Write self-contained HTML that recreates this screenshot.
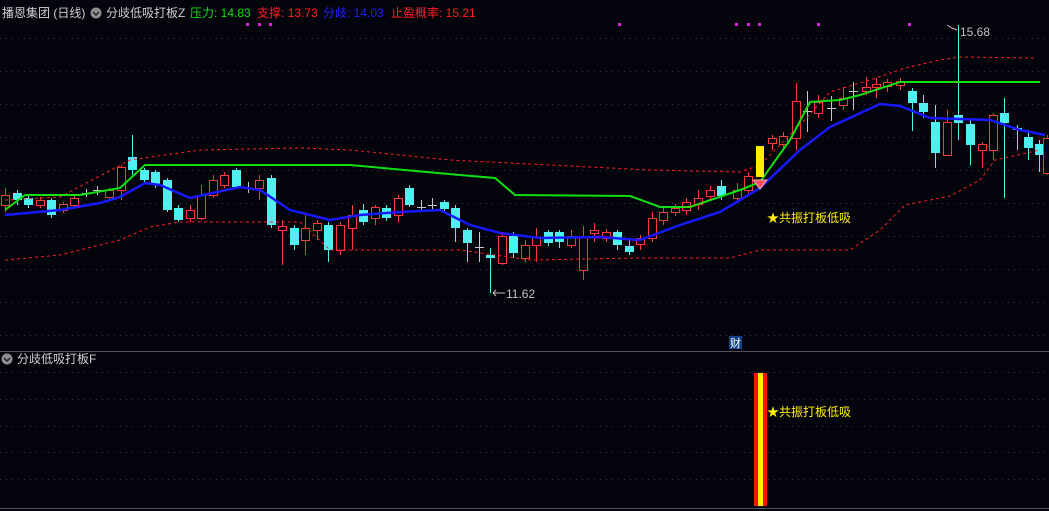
<!DOCTYPE html>
<html><head><meta charset="utf-8"><style>
html,body{margin:0;padding:0;background:#04040c;width:1049px;height:511px;overflow:hidden}
svg{display:block}
text{font-family:"Liberation Sans","Noto Sans CJK SC",sans-serif}
</style></head><body>
<svg id="s" width="1049" height="511" xmlns="http://www.w3.org/2000/svg">
<rect width="1049" height="511" fill="#04040c"/>
<g stroke="#3a3a46" stroke-width="1" stroke-dasharray="1,5">
<line x1="0" y1="38.5" x2="1049" y2="38.5"/><line x1="0" y1="71.5" x2="1049" y2="71.5"/>
<line x1="0" y1="104.5" x2="1049" y2="104.5"/><line x1="0" y1="137.5" x2="1049" y2="137.5"/>
<line x1="0" y1="170.5" x2="1049" y2="170.5"/><line x1="0" y1="203.5" x2="1049" y2="203.5"/>
<line x1="0" y1="236.5" x2="1049" y2="236.5"/><line x1="0" y1="269.5" x2="1049" y2="269.5"/>
<line x1="0" y1="302.5" x2="1049" y2="302.5"/><line x1="0" y1="335.5" x2="1049" y2="335.5"/>
<line x1="0" y1="372.5" x2="1049" y2="372.5"/><line x1="0" y1="399.5" x2="1049" y2="399.5"/>
<line x1="0" y1="426.5" x2="1049" y2="426.5"/><line x1="0" y1="452.5" x2="1049" y2="452.5"/>
<line x1="0" y1="479.5" x2="1049" y2="479.5"/>
</g>
<line x1="0" y1="351.5" x2="1049" y2="351.5" stroke="#50505a"/>
<line x1="0" y1="508.5" x2="1049" y2="508.5" stroke="#50505a"/>
<g id="c"></g>
<polyline fill="none" stroke="#ff2020" stroke-width="1" stroke-dasharray="3,3" points="5,200 60,197 130,160 200,150 300,148 350,150 450,160 550,165 650,170 740,172 760,165 800,125 830,92 870,80 905,68 940,60 960,57 1035,58"/>
<polyline fill="none" stroke="#ff2020" stroke-width="1" stroke-dasharray="3,3" points="5,260 60,255 120,240 150,227 180,222 300,222 330,250 460,250 530,260 640,258 730,258 760,250 850,250 880,230 905,205 950,196 980,180 995,160 1040,150"/>
<polyline fill="none" stroke="#10e010" stroke-width="2" points="5,210 25,195 80,195 120,188 145,165 350,165 460,175 495,178 515,195 630,196 660,207 690,207 740,190 760,182 790,140 810,102 840,100 860,95 900,82 1040,82"/>
<polyline fill="none" stroke="#1818ff" stroke-width="2.5" points="5,215 60,210 100,203 120,197 145,183 160,185 190,198 240,187 260,190 290,210 330,220 360,215 400,212 440,210 470,225 500,233 540,238 600,237 640,240 680,225 720,212 760,188 800,150 830,127 880,104 900,106 930,118 990,120 1020,130 1045,135"/>
<rect x="756" y="146" width="8" height="31" fill="#ffee00"/>
<path d="M753,180 L767,180 L760,189 Z" fill="#ff5060" stroke="#ffb0b0" stroke-width="1"/>
<g fill="#e020e0"><rect x="246" y="23" width="3" height="3"/><rect x="258" y="23" width="3" height="3"/><rect x="269" y="23" width="3" height="3"/><rect x="618" y="23" width="3" height="3"/><rect x="735" y="23" width="3" height="3"/><rect x="747" y="23" width="3" height="3"/><rect x="758" y="23" width="3" height="3"/><rect x="817" y="23" width="3" height="3"/><rect x="908" y="23" width="3" height="3"/></g>
<path d="M947,25 L952,28 L957,30" fill="none" stroke="#c0c0c0"/>
<text x="960" y="36" font-size="12" fill="#c0c0c0">15.68</text>
<path d="M493,293 L505,293 M493,293 L496,290 M493,293 L496,296" stroke="#c0c0c0" fill="none"/>
<text x="506" y="298" font-size="12" fill="#c0c0c0">11.62</text>
<rect x="729" y="336" width="13" height="13" fill="#10408a"/>
<text x="730" y="347" font-size="11" fill="#fff">财</text>
<text x="767" y="222" font-size="12" fill="#ffee00">★共振打板低吸</text>
<rect x="754" y="373" width="13" height="133" fill="#ff1010"/>
<rect x="758" y="373" width="5" height="133" fill="#ffee00"/>
<text x="767" y="416" font-size="12" fill="#ffee00">★共振打板低吸</text>
<text x="2" y="17" font-size="12" fill="#d0d0d0">播恩集团 (日线)</text>
<circle cx="96" cy="13" r="5.5" fill="#909090"/><path d="M93,12 L96,15 L99,12" stroke="#222" fill="none" stroke-width="1.5"/>
<text x="106" y="17" font-size="12" fill="#d0d0d0">分歧低吸打板Z</text>
<text x="190" y="17" font-size="12" fill="#10e010">压力: 14.83</text>
<text x="257" y="17" font-size="12" fill="#ff2020">支撑: 13.73</text>
<text x="323" y="17" font-size="12" fill="#2020ff">分歧: 14.03</text>
<text x="391" y="17" font-size="12" fill="#ff2020">止盈概率: 15.21</text>
<circle cx="7" cy="359" r="5.5" fill="#909090"/><path d="M4,358 L7,361 L10,358" stroke="#222" fill="none" stroke-width="1.5"/>
<text x="17" y="363" font-size="12" fill="#d0d0d0">分歧低吸打板F</text>
</svg>
<script>
var L=[[205,195,188,212],[193,200,190,205],[198,205,196,208],[205,200,197,208],[200,215,198,218],[210,204,202,213],[205,198,196,208],[193,193,189,197],[190,190,186,195],[197,190,188,200],[190,167,165,200],[157,170,135,175],[170,180,168,183],[172,185,170,188],[180,210,178,212],[208,220,205,222],[218,210,205,222],[218,195,185,220],[195,180,175,198],[185,175,172,188],[170,187,168,188],[188,188,182,193],[188,180,175,200],[178,225,175,228],[230,226,220,265],[228,245,225,250],[240,228,215,255],[230,223,220,240],[225,250,222,262],[250,225,222,255],[228,215,205,250],[210,222,204,225],[218,207,205,225],[208,218,205,221],[215,198,195,222],[188,205,185,207],[207,207,200,212],[205,205,198,210],[202,209,200,212],[208,228,205,242],[230,243,228,262],[247,247,232,262],[255,258,248,293],[263,236,232,265],[236,253,232,258],[258,245,240,262],[245,237,228,262],[232,243,230,246],[232,242,230,248],[245,236,230,248],[270,236,226,280],[233,230,223,242],[238,232,229,242],[232,245,230,250],[246,252,240,255],[244,238,235,250],[238,218,212,242],[220,212,208,225],[212,208,204,216],[210,202,198,215],[204,198,190,210],[196,190,186,200],[186,196,180,200]];
var R=[[737,198,190,183,201],[748,190,176,172,196],[772,143,138,135,150],[783,144,136,132,150],[796,138,101,83,150],[807,111,111,91,132],[818,113,102,95,118],[831,108,108,96,121],[843,105,98,87,110],[853,91,91,82,110],[866,91,87,77,95],[876,87,84,78,98],[887,86,82,79,92],[900,85,81,78,90],[912,91,103,88,131],[923,103,112,95,118],[935,122,153,105,168],[947,155,122,110,155],[958,115,123,25,140],[970,124,145,120,165],[982,150,144,142,168],[993,150,115,113,160],[1004,113,123,98,198],[1017,128,130,125,150],[1028,137,148,130,160],[1039,144,155,140,172],[1047,173,138,135,175]];
var all=[];L.forEach(function(d,i){all.push([5+i*11.55].concat(d))});all=all.concat(R);
var h='';all.forEach(function(d){var x=Math.round(d[0]),o=d[1],c=d[2],hi=d[3],lo=d[4];var up=c<o;var col=up?'#ff3a3a':'#50f0f0';var top=Math.min(o,c),bot=Math.max(o,c);
h+='<line x1="'+(x+.5)+'" y1="'+hi+'" x2="'+(x+.5)+'" y2="'+lo+'" stroke="'+(o==c?'#c8c8c8':col)+'"/>';
if(o==c){h+='<line x1="'+(x-4)+'" y1="'+(o+.5)+'" x2="'+(x+5)+'" y2="'+(o+.5)+'" stroke="#c8c8c8"/>';}
else if(up){h+='<rect x="'+(x-3.5)+'" y="'+(top+.5)+'" width="8" height="'+Math.max(1,bot-top)+'" fill="#04040c" stroke="'+col+'"/>';}
else{h+='<rect x="'+(x-4)+'" y="'+top+'" width="9" height="'+Math.max(1,bot-top)+'" fill="'+col+'"/>';}});
document.getElementById('c').innerHTML=h;
</script>
</body></html>
